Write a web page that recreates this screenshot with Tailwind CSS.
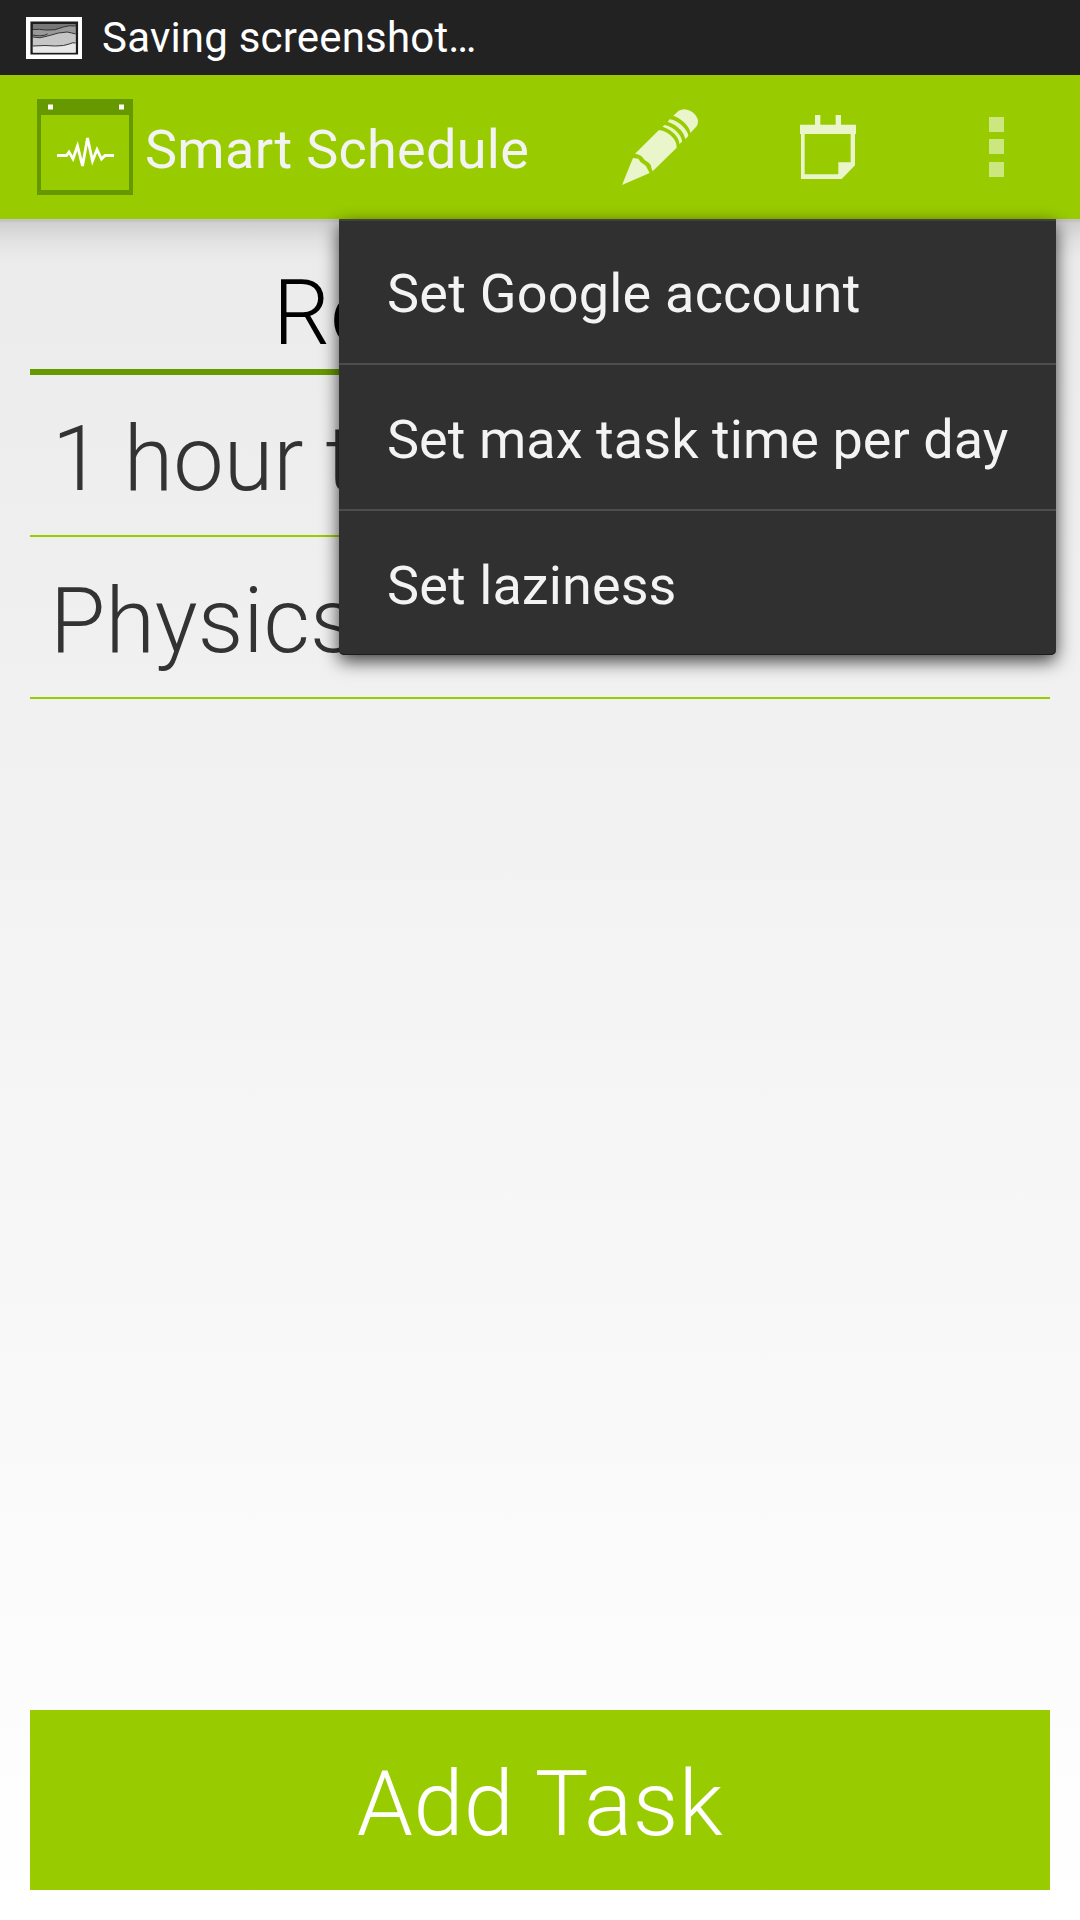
<!DOCTYPE html>
<html lang="en">
<head>
<meta charset="utf-8">
<title>Smart Schedule</title>
<script src="https://cdn.jsdelivr.net/npm/@tailwindcss/browser@4"></script>
</head>
<body class="font-[Roboto,sans-serif] bg-white">
<div class="relative flex flex-col w-[1080px] h-[1920px] overflow-hidden">
  <!-- status bar -->
  <div class="flex items-center h-[75px] shrink-0 bg-[#222222] pl-[26px]">
    <svg class="w-[56px] h-[42px]" viewBox="0 0 57 42" preserveAspectRatio="none">
      <rect width="57" height="42" fill="#fff"/>
      <rect x="4.5" y="4.5" width="48.500" height="33" fill="#1c1c1c"/>
      <rect x="7" y="7" width="43.500" height="28.500" fill="#777"/>
      <path d="M7 13Q14 12 20 13Q30 14 38 10Q44 8 50.500 9V35.500H7Z" fill="#999"/>
      <path d="M7 20Q14 22 22 19Q34 15 42 15Q47 16 50.500 17V35.500H7Z" fill="#c6c6c6"/>
      <path d="M7 29Q20 28 30 29Q39 29 44 27Q48 25 50.500 26V35.500H7Z" fill="#e8e8e8"/>
      <path d="M7 12.500Q14 12 20 13Q30 14 38 10Q44 8 50.500 9M7 18Q16 20 22 17M7 20Q14 22 22 19Q34 15 42 15Q47 16 50.500 17M7 29Q20 28 30 29Q39 29 44 27Q48 25 50.500 26" fill="none" stroke="#333"/>
    </svg>
    <span class="ml-5 text-[42px] leading-none tracking-[0.2px] text-white whitespace-nowrap">Saving screenshot…</span>
  </div>

  <!-- action bar -->
  <header class="flex items-center h-36 shrink-0 bg-[#99cc00] pl-[37px]">
    <svg class="w-24 h-24 shrink-0" viewBox="0 0 96 96">
      <path fill="#669900" fill-rule="evenodd" d="M0 0H96V96H0ZM4 16V91H92V16Z"/>
      <path fill="#fff" d="M11 5.500h5v5h-5zM82 5.500h5v5h-5z"/>
      <path d="M20 56.500H29.500L32 53L36 60L40.500 47L45.500 67L50.500 39L55.500 62L60 50.500L64.500 60L68 56.500H77" fill="none" stroke="#fff" stroke-width="2.800"/>
    </svg>
    <h1 class="ml-3 pt-[5px] w-[431px] text-[54px] leading-none tracking-[0.28px] text-[#f3f3f3] whitespace-nowrap">Smart Schedule</h1>
    <div class="flex">
      <button class="flex items-center justify-center w-42 h-36">
        <svg class="w-[76px] h-[76px]" viewBox="66 57 228 228" fill="#eaf5cc">
          <path d="M66 285L99 204L115 206Q119 215 130 222Q140 227 143 238L149 249Z"/>
          <path d="M105 191L177 120Q204 124 220 145Q230 157 230 173L158 244L154 234Q154 222 143 216Q134 212 126 200Q121 194 105 191Z"/>
          <path d="M188 110L193 105Q217 109 234 129Q246 143 246 155L238 162Q238 150 227 136Q211 117 188 110Z"/>
          <path d="M203 95L209 88Q231 91 250 111Q264 126 265 138L256 147Q254 133 242 120Q226 102 203 95Z"/>
          <path d="M220 77L236 62Q252 53 270 62Q287 70 293 87Q296 99 290 109L271 129Q270 116 255 100Q239 83 220 77Z"/>
        </svg>
      </button>
      <button class="flex items-center justify-center w-42 h-36">
        <svg class="w-14 h-16" viewBox="600 75 168 192" fill="#eaf5cc">
          <path fill-rule="evenodd" d="M600 104H645V75H661V104H707V75H723V104H768V132H765V226L725 267H603V132H600ZM614 132V253H715V217H752V132Z"/>
        </svg>
      </button>
      <button class="flex items-center justify-center w-42 h-36">
        <svg class="w-[15px] h-[60px]" viewBox="0 0 15 60" fill="#cce680">
          <path d="M0 0h15v15H0zM0 22h15v15H0zM0 45h15v15H0z"/>
        </svg>
      </button>
    </div>
  </header>

  <!-- task list -->
  <main class="flex flex-col flex-1 bg-linear-to-b from-[#ebebeb] to-white">
    <div class="h-[3px] bg-[#c4c4c4]"></div>
    <div class="h-[38px] -mb-[38px] bg-linear-to-b from-black/12 via-black/4 to-transparent"></div>
    <div class="mx-[30px] flex flex-col flex-1 font-light text-[90px] leading-none">
      <h2 class="h-[153px] pt-[47px] pl-[243px] border-b-[6px] border-[#669900] text-black whitespace-nowrap">Re</h2>
      <div class="flex items-center h-[162px] pt-2.5 pl-[22px] border-b-2 border-[#99cc00] text-[#333] whitespace-nowrap">1 hour t</div>
      <div class="flex items-center h-[162px] pt-2.5 pl-5 border-b-2 border-[#99cc00] text-[#333] whitespace-nowrap">Physics</div>
      <button class="mt-auto mb-[30px] flex items-center justify-center h-[180px] pt-2.5 tracking-[0.4px] bg-[#99cc00] text-white whitespace-nowrap">Add Task</button>
    </div>
  </main>

  <!-- overflow menu -->
  <ul class="absolute left-[339px] top-[219px] w-[717px] h-[436px] rounded-b-[5px] bg-[#303030] text-[54px] leading-none text-[#f3f3f3] whitespace-nowrap shadow-[0_6px_18px_rgba(0,0,0,0.75),inset_0_2px_0_#414141,inset_0_-1px_0_#1c1c1c]">
    <li class="flex items-center h-[146px] pt-1.5 pl-12 tracking-[0.22px] border-b-2 border-[#4d4d4d]">Set Google account</li>
    <li class="flex items-center h-[146px] pt-1.5 pl-12 tracking-[0.05px] border-b-2 border-[#4d4d4d]">Set max task time per day</li>
    <li class="flex items-center h-36 pt-1.5 pl-12 tracking-[0.1px]">Set laziness</li>
  </ul>
</div>
</body>
</html>
